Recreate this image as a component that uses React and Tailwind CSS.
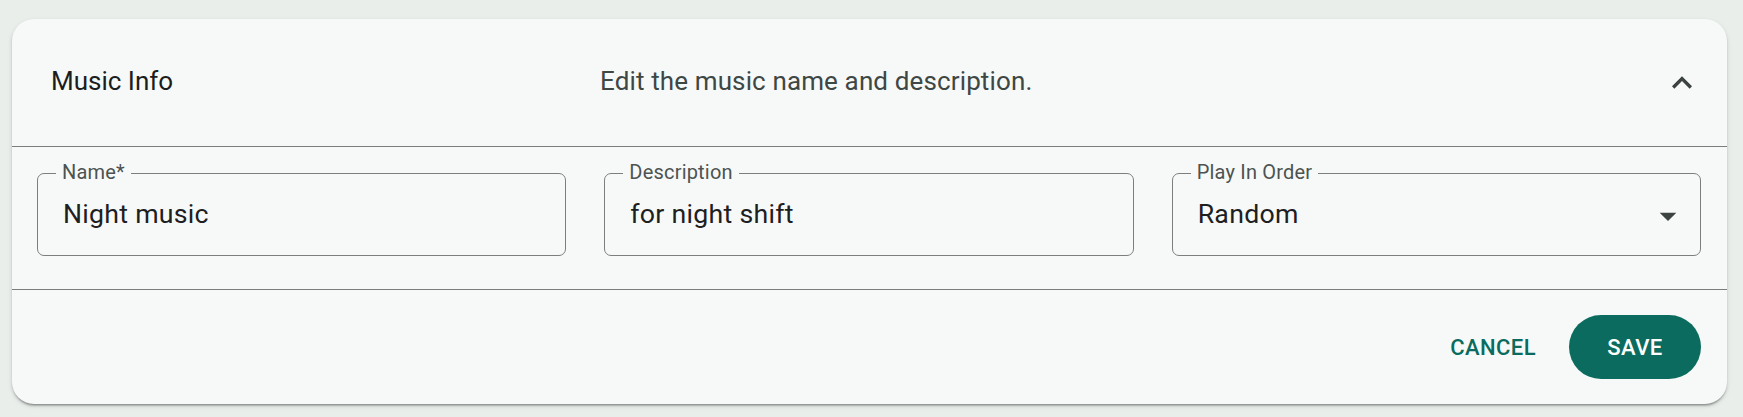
import React from "react";

function Field({ label, value, select }) {
  return (
    <div className="relative h-[83px] rounded-[7px] border border-[#7b7f7d] flex items-center pl-[25px] pr-[12px]">
      <span className="absolute top-[-12px] left-[18px] px-[6px] bg-[#f7f9f8] text-[20px] leading-none text-[#4d5351] tracking-[0.01em]">
        {label}
      </span>
      <span className="flex-1 text-[26.7px] text-[#1d201f] tracking-[0.01em]">{value}</span>
      {select && (
        <svg viewBox="0 0 24 24" className="w-[40px] h-[40px] fill-[#3c4341] mt-[2px]">
          <path d="M7 10l5 5 5-5z" />
        </svg>
      )}
    </div>
  );
}

export default function App() {
  return (
    <div className="min-h-screen bg-[#e9eeeb] pt-[19px] pb-[13px] font-['Roboto','Noto_Sans',sans-serif]">
      <div className="ml-[12px] mr-[16px] rounded-[22px] bg-[#f7f9f8] shadow-[0_3px_2px_-2px_rgba(0,0,0,0.25),0_2px_2px_0_rgba(0,0,0,0.14),0_2px_5px_0_rgba(0,0,0,0.12)] overflow-hidden">
        <div className="h-[127px] flex items-center pl-[39px] pr-[25px] pb-[3px]">
          <div className="w-[549px] shrink-0 text-[26px] text-[#1c1e1d]">Music Info</div>
          <div className="flex-1 text-[26px] text-[#3e4744] tracking-[0.005em]">Edit the music name and description.</div>
          <svg viewBox="0 0 24 24" className="w-[40px] h-[40px] fill-[#3c4341] mt-[3px]">
            <path d="M12 8l-6 6 1.41 1.41L12 10.83l4.59 4.58L18 14z" />
          </svg>
        </div>
        <div className="h-px bg-[#7b7d7c]" />
        <div className="grid grid-cols-3 gap-[38px] pl-[25px] pr-[26px] pt-[26px] pb-[33px]">
          <Field label="Name*" value="Night music" />
          <Field label="Description" value="for night shift" />
          <Field label="Play In Order" value="Random" select />
        </div>
        <div className="h-px bg-[#7b7d7c]" />
        <div className="h-[114px] flex items-center justify-end pr-[26px]">
          <button className="h-[60px] px-[14px] mr-[19px] text-[22px] font-medium uppercase tracking-[0.02em] text-[#0b6b5e] rounded-full">
            Cancel
          </button>
          <button className="h-[64px] w-[132px] rounded-full bg-[#0b6b5e] text-white text-[22px] font-medium uppercase tracking-[0.02em]">
            Save
          </button>
        </div>
      </div>
    </div>
  );
}
